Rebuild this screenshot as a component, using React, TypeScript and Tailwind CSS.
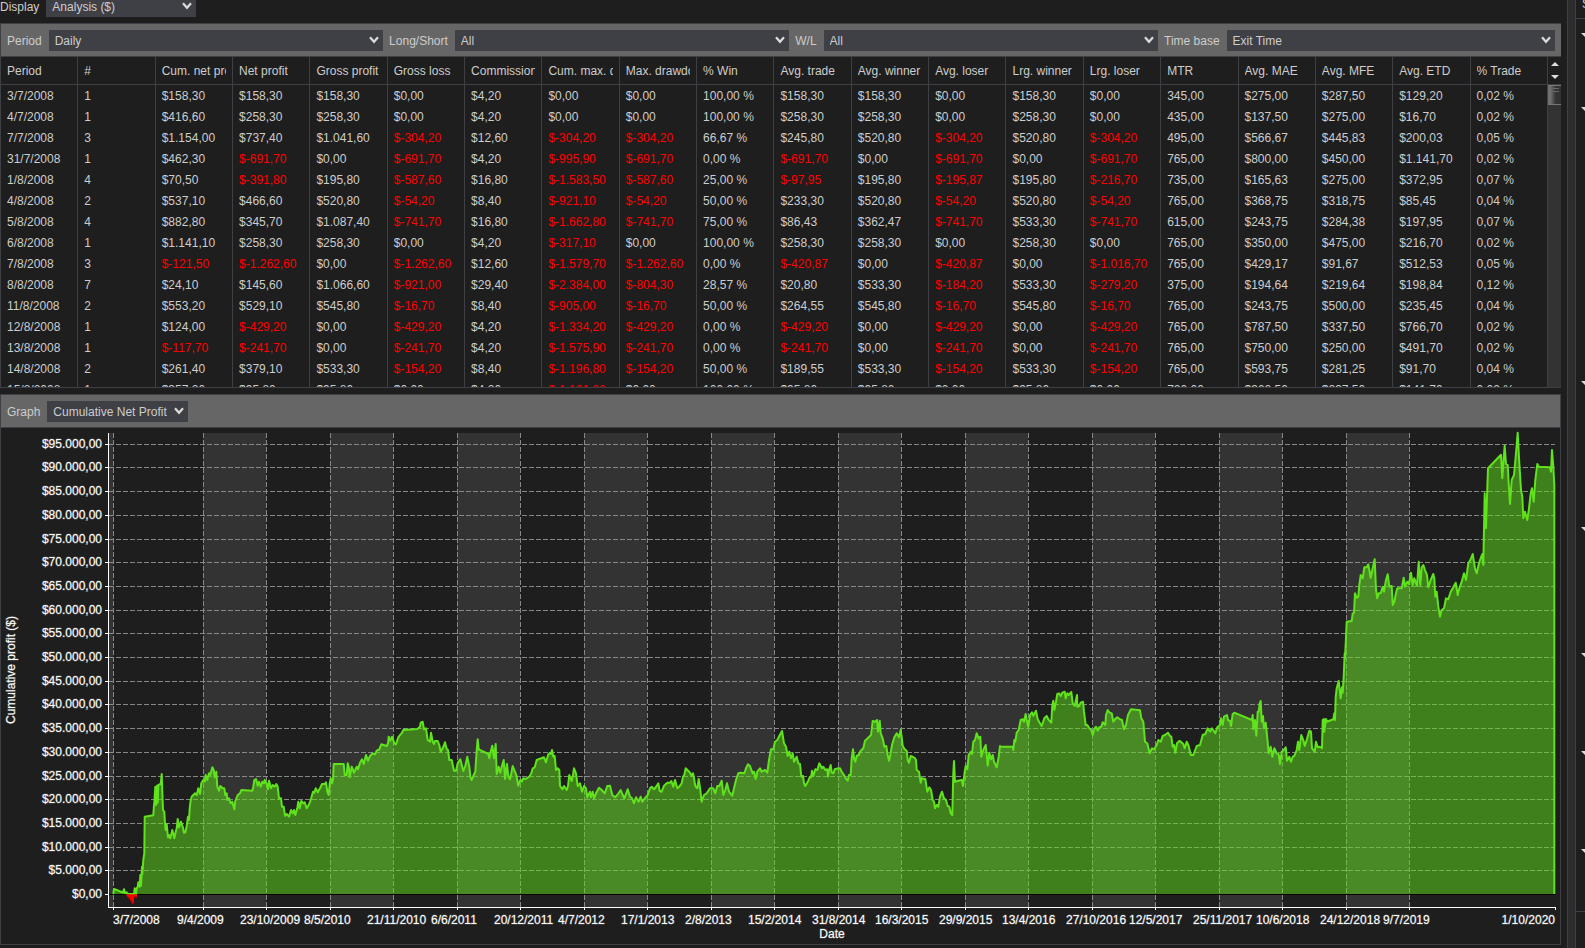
import { useState } from "react"

const columns = [
  'Period', '#', 'Cum. net profit', 'Net profit', 'Gross profit', 'Gross loss', 'Commission',
  'Cum. max. drawdown', 'Max. drawdown', '% Win', 'Avg. trade', 'Avg. winner', 'Avg. loser',
  'Lrg. winner', 'Lrg. loser', 'MTR', 'Avg. MAE', 'Avg. MFE', 'Avg. ETD', '% Trade',
];

const rows = [
  '3/7/2008|1|$158,30|$158,30|$158,30|$0,00|$4,20|$0,00|$0,00|100,00 %|$158,30|$158,30|$0,00|$158,30|$0,00|345,00|$275,00|$287,50|$129,20|0,02 %',
  '4/7/2008|1|$416,60|$258,30|$258,30|$0,00|$4,20|$0,00|$0,00|100,00 %|$258,30|$258,30|$0,00|$258,30|$0,00|435,00|$137,50|$275,00|$16,70|0,02 %',
  '7/7/2008|3|$1.154,00|$737,40|$1.041,60|$-304,20|$12,60|$-304,20|$-304,20|66,67 %|$245,80|$520,80|$-304,20|$520,80|$-304,20|495,00|$566,67|$445,83|$200,03|0,05 %',
  '31/7/2008|1|$462,30|$-691,70|$0,00|$-691,70|$4,20|$-995,90|$-691,70|0,00 %|$-691,70|$0,00|$-691,70|$0,00|$-691,70|765,00|$800,00|$450,00|$1.141,70|0,02 %',
  '1/8/2008|4|$70,50|$-391,80|$195,80|$-587,60|$16,80|$-1.583,50|$-587,60|25,00 %|$-97,95|$195,80|$-195,87|$195,80|$-216,70|735,00|$165,63|$275,00|$372,95|0,07 %',
  '4/8/2008|2|$537,10|$466,60|$520,80|$-54,20|$8,40|$-921,10|$-54,20|50,00 %|$233,30|$520,80|$-54,20|$520,80|$-54,20|765,00|$368,75|$318,75|$85,45|0,04 %',
  '5/8/2008|4|$882,80|$345,70|$1.087,40|$-741,70|$16,80|$-1.662,80|$-741,70|75,00 %|$86,43|$362,47|$-741,70|$533,30|$-741,70|615,00|$243,75|$284,38|$197,95|0,07 %',
  '6/8/2008|1|$1.141,10|$258,30|$258,30|$0,00|$4,20|$-317,10|$0,00|100,00 %|$258,30|$258,30|$0,00|$258,30|$0,00|765,00|$350,00|$475,00|$216,70|0,02 %',
  '7/8/2008|3|$-121,50|$-1.262,60|$0,00|$-1.262,60|$12,60|$-1.579,70|$-1.262,60|0,00 %|$-420,87|$0,00|$-420,87|$0,00|$-1.016,70|765,00|$429,17|$91,67|$512,53|0,05 %',
  '8/8/2008|7|$24,10|$145,60|$1.066,60|$-921,00|$29,40|$-2.384,00|$-804,30|28,57 %|$20,80|$533,30|$-184,20|$533,30|$-279,20|375,00|$194,64|$219,64|$198,84|0,12 %',
  '11/8/2008|2|$553,20|$529,10|$545,80|$-16,70|$8,40|$-905,00|$-16,70|50,00 %|$264,55|$545,80|$-16,70|$545,80|$-16,70|765,00|$243,75|$500,00|$235,45|0,04 %',
  '12/8/2008|1|$124,00|$-429,20|$0,00|$-429,20|$4,20|$-1.334,20|$-429,20|0,00 %|$-429,20|$0,00|$-429,20|$0,00|$-429,20|765,00|$787,50|$337,50|$766,70|0,02 %',
  '13/8/2008|1|$-117,70|$-241,70|$0,00|$-241,70|$4,20|$-1.575,90|$-241,70|0,00 %|$-241,70|$0,00|$-241,70|$0,00|$-241,70|765,00|$750,00|$250,00|$491,70|0,02 %',
  '14/8/2008|2|$261,40|$379,10|$533,30|$-154,20|$8,40|$-1.196,80|$-154,20|50,00 %|$189,55|$533,30|$-154,20|$533,30|$-154,20|765,00|$593,75|$281,25|$91,70|0,04 %',
  '15/8/2008|1|$357,20|$95,80|$95,80|$0,00|$4,20|$-1.101,00|$0,00|100,00 %|$95,80|$95,80|$0,00|$95,80|$0,00|720,00|$362,50|$237,50|$141,70|0,02 %',
].map(row => row.split('|'));

const yTicks: [number, string][] = [
  [444, '$95.000,00'], [467, '$90.000,00'], [491, '$85.000,00'], [515, '$80.000,00'], [539, '$75.000,00'],
  [562, '$70.000,00'], [586, '$65.000,00'], [610, '$60.000,00'], [633, '$55.000,00'], [657, '$50.000,00'],
  [681, '$45.000,00'], [704, '$40.000,00'], [728, '$35.000,00'], [752, '$30.000,00'], [776, '$25.000,00'],
  [799, '$20.000,00'], [823, '$15.000,00'], [847, '$10.000,00'], [870, '$5.000,00'], [894, '$0,00'],
];

const xTicks: [number, string][] = [
  [113, '3/7/2008'], [203, '9/4/2009'], [266, '23/10/2009'], [330, '8/5/2010'], [393, '21/11/2010'],
  [457, '6/6/2011'], [520, '20/12/2011'], [584, '4/7/2012'], [647, '17/1/2013'], [711, '2/8/2013'],
  [774, '15/2/2014'], [838, '31/8/2014'], [901, '16/3/2015'], [965, '29/9/2015'], [1028, '13/4/2016'],
  [1092, '27/10/2016'], [1155, '12/5/2017'], [1219, '25/11/2017'], [1282, '10/6/2018'], [1346, '24/12/2018'],
  [1409, '9/7/2019'], [1555, '1/10/2020'],
];

// equity curve, stored in pieces: [x offset, y offset, points], three units per chart pixel
const curve: [number, number, string][] = [
  [0, 0, '340,522 342,507 350,510 362,515 368,518 372,508 375,520 380,517 384,522 402,522 404,505 408,522 410,505 413,500 415,487 419,500 421,465 423,497 426,440 427,462 430,420 433,400 434,290 460,286 462,255 463,250 466,200 468,255 471,197 473,248 475,195 482,192 485,162 487,215 489,270 493,275 495,310 497,330 500,312 504,352 507,345 511,355 517,330 523,355 527,335 530,325 533,297 537,322 543,305 548,320 552,338 556,337 560,318 564,290 567,300 569,265 572,240 575,230 585,220 590,225 595,205 600,222 604,190 610,180 614,185 617,165 622,180 627,160 631,165 637,142 641,150 644,172 649,155 652,200 657,212 661,198 668,205 673,205 676,225 680,220 682,240 687,235 692,250 697,245 703,268 706,243 713,225 720,220 724,210 757,212 760,200 763,180 768,177 773,197 777,185 782,200 787,185 792,190 794,180 800,192 804,208 807,182 813,205 818,195 824,200 829,192 833,200 837,235 843,235 846,260 851,260 855,287 860,282 867,290 873,270 878,280 882,270 886,285 892,265 895,245 899,265 904,243 910,250 914,247 920,265 926,255 932,240 939,215 943,218 947,205 953,217 960,205 966,192 974,192 978,187 982,215 986,225 989,190 992,175 996,190 999,180 1001,132 1031,132 1034,165 1040,165 1043,130 1046,140 1049,172 1055,140 1062,158 1070,140 1074,148 1080,128 1086,118 1091,132 1098,105 1104,122 1110,108 1118,100 1125,103 1130,92 1138,88 1144,73 1160,78 1164,70 1166,50 1171,62 1176,50 1183,70 1188,73 1195,52'],
  [1200, -120, '0,165 5,160 10,150 52,147 60,140 62,128 68,125 72,148 78,145 83,180 90,185 93,158 98,185 102,192 105,183 113,183 118,195 122,215 128,205 135,187 140,207 144,210 148,240 155,240 162,272 168,272 173,250 181,238 190,273 196,258 202,230 208,260 211,290 215,300 220,288 226,275 230,210 233,178 236,208 265,222 268,235 272,215 277,197 282,235 287,192 290,282 296,260 301,278 305,260 311,240 315,297 321,252 325,290 330,298 334,280 338,258 343,270 349,285 355,317 361,300 365,305 370,295 377,297 388,290 394,280 398,265 404,262 410,240 432,232 438,247 444,225 450,218 453,222 456,210 460,230 464,228 468,270 473,265 478,270 480,318 487,328 492,318 500,330 504,318 508,285 515,303 519,285 522,265 528,280 533,318 540,310 546,335 552,318 558,325 562,352 570,335 573,352 578,335 582,355 588,340 597,323 605,330 614,340 622,318 630,317 637,345 645,352 652,345 662,330 667,342 673,355 683,328 690,350 696,355 702,370 708,352 716,365 722,350 727,365 734,355 743,345 750,325 755,320 762,328 770,318 775,310 779,333 785,335 792,317 802,308 810,308 814,303 820,320 825,300 832,325 838,320 845,310 849,290 853,285 857,265 870,278 875,287 879,280 882,295 886,318 892,325 896,297 901,330 905,365 912,345 920,340 930,325 940,325 946,340 952,318 958,318 965,302 970,345 976,330 981,310 987,335 997,347 1002,325 1008,300 1015,280 1022,278 1033,280 1038,265 1044,253 1050,258 1058,280 1062,275 1067,297 1072,275 1080,265 1085,275 1095,270 1102,278 1107,240 1113,208 1120,208 1125,185 1132,180 1138,168 1146,153 1152,190 1158,200 1163,228 1168,215 1173,235 1178,220 1182,245 1190,230 1195,250'],
  [2400, -120, '0,252 4,290 9,288 12,310 16,318 25,302 30,290 33,292 36,272 40,288 46,268 52,270 58,250 66,265 70,260 76,270 82,268 84,290 88,268 92,255 95,278 100,280 104,268 115,265 120,265 125,275 132,285 137,295 143,302 147,285 152,285 155,235 159,208 162,235 166,245 170,228 176,225 182,212 190,205 195,182 203,175 210,168 213,165 218,123 226,125 231,120 234,155 239,122 242,160 248,175 253,200 259,198 262,220 267,242 271,225 276,195 283,172 290,160 297,172 302,150 305,172 308,198 314,208 320,212 323,240 327,248 332,228 338,230 345,235 348,240 350,270 357,275 362,308 365,295 376,297 382,335 388,322 393,330 398,360 402,365 405,385 410,375 415,380 420,350 426,335 432,355 438,360 443,378 448,380 452,400 457,405 460,280 462,243 465,305 475,302 486,300 489,318 494,275 497,258 502,268 506,225 512,215 516,222 520,185 525,180 530,160 536,175 541,170 544,230 550,210 557,195 560,225 563,257 568,218 573,238 578,225 582,245 590,262 596,230 600,198 603,200 638,200 640,210 643,180 646,185 650,158 656,150 662,120 668,118 672,125 677,102 680,120 685,140 690,105 696,97 700,107 708,92 713,118 720,130 725,138 733,115 740,108 745,118 754,128 757,75 760,62 763,90 768,65 772,42 777,40 782,48 787,38 794,35 797,55 802,40 806,45 814,36 818,70 824,78 831,45 832,80 838,78 842,68 849,65 852,95 857,135 862,135 868,145 874,150 878,165 884,145 888,140 893,152 898,142 904,140 908,127 916,135 918,105 923,90 928,97 935,100 940,125 945,118 952,112 960,118 966,120 972,148 978,135 984,105 993,88 1020,91 1024,115 1030,125 1035,185 1042,190 1049,220 1056,205 1062,208 1070,195 1075,180 1082,185 1088,168 1095,165 1104,158 1110,168 1114,170 1118,200 1122,195 1126,218 1131,190 1138,183'],
  [3540, -240, '0,303 10,312 14,325 20,305 26,318 32,345 40,345 50,318 60,315 68,285 76,282 83,265 90,275 96,265 106,280 112,262 120,255 123,235 128,255 132,230 141,225 144,240 150,243 153,258 158,222 163,218 216,240 218,225 220,268 225,240 229,287 233,215 236,215 239,190 242,183 245,245 249,228 252,265 257,248 262,295 266,340 272,320 277,350 283,325 290,340 296,343 300,372 305,335 311,330 317,322 321,362 328,350 333,365 338,350 343,348 350,330 354,305 358,330 364,285 370,300 374,318 380,300 388,272 393,275 396,325 404,335 408,305 413,322 420,320 426,325 428,240 432,237 433,275 438,237 441,245 460,238 463,220 465,240 467,170 470,145 476,123 482,175 486,142 488,158 491,110 494,40'],
  [3185, -1170, '850,985 855,875 870,873 873,850 877,848 880,790 885,803 890,800 893,765 897,735 903,745 908,712 915,712 920,703 927,743 933,715 939,688 943,780 947,805 951,790 957,790 963,770 967,785 973,750 978,733 983,770 990,768 993,825 998,815 1003,790 1007,775 1020,775 1026,743 1030,770 1037,755 1042,762 1048,728 1053,765 1058,745 1066,768 1071,695 1076,765 1080,712 1085,705 1090,720 1096,735 1100,772 1107,750 1115,732 1118,745 1121,800 1125,785 1130,830 1135,860 1140,840 1147,835 1153,805 1160,808 1167,785 1173,775 1182,758 1188,795 1193,775 1200,755 1207,730 1213,750 1220,700 1226,690 1233,672 1240,715 1245,730 1252,700 1258,682 1262,672 1265,705 1269,490 1273,595 1276,500 1279,415 1318,374 1322,445 1326,385 1329,347 1333,402 1338,405 1341,460 1345,522 1350,450 1357,435 1362,380 1368,308 1373,400 1378,480 1382,500 1385,565 1390,545 1397,570 1402,535 1407,490 1411,475 1416,515 1421,450 1427,402 1432,410 1464,412 1468,425 1471,360 1475,410 1478,465 1478,1692'],
];

const linePoints = curve.map(([dx, dy, points]) => (
  points.split(' ').map(point => {
    const [x, y] = point.split(',').map(Number);
    return `${((x + dx) / 3).toFixed(1)},${(720 + (y + dy) / 3).toFixed(1)}`;
  }).join(' ')
)).join(' ');

// heights of the property groups in the side panel
const groups = ['h-[74px]', 'h-[274px]', 'h-[146px]', 'h-[126px]', 'h-[98px]', 'h-[98px]', 'h-[62px]'];

type DropdownProps = {
  id: string;
  label: string;
  options: string[];
  className: string;
};

function Dropdown({ id, label, options, className }: DropdownProps) {
  const [value, setValue] = useState(options[0]);
  return (
    <>
      <label htmlFor={id} className="h-[21px] shrink-0 whitespace-nowrap pr-px pt-px leading-[21px]">{label}</label>
      <div className={'relative min-w-0 ' + className}>
        <select
          id={id}
          value={value}
          onChange={ev => setValue(ev.target.value)}
          className="block h-[21px] w-full appearance-none bg-[#3f3f46] pl-1.5 pr-4 pt-0.5 leading-[19px] text-[#cdcdcd] outline-none"
        >
          {options.map(option => <option key={option}>{option}</option>)}
        </select>
        <svg viewBox="0 0 10 8" className="pointer-events-none absolute right-1 top-1.5 h-2 w-2.5" aria-hidden="true">
          <path d="M1 1.2 L5 5.8 L9 1.2" fill="none" stroke="#dcdcdc" strokeWidth="2.2" />
        </svg>
      </div>
    </>
  );
}

function TradesTable() {
  return (
    <div className="flex h-[330px] overflow-hidden">
      <div className="min-w-0 flex-1">
        <table className="w-full table-fixed border-separate border-spacing-0">
          <thead>
            <tr>
              {columns.map(column => (
                <th key={column} className="h-7 border-b border-r border-[#3f3f46] p-0 pl-1.5 pr-1.5 text-left font-normal">
                  <div className="overflow-hidden whitespace-nowrap">{column}</div>
                </th>
              ))}
            </tr>
          </thead>
          <tbody>
            {rows.map(row => (
              <tr key={row[0]}>
                {row.map((cell, i) => (
                  <td
                    key={i}
                    className={'h-[21px] whitespace-nowrap border-r border-[#3f3f46] p-0 pl-1.5 ' + (cell.startsWith('$-') ? 'text-[#f00]' : '')}
                  >
                    {cell}
                  </td>
                ))}
              </tr>
            ))}
          </tbody>
        </table>
      </div>
      <div className="flex w-[13px] flex-col bg-[#333]">
        <div className="flex h-7 flex-col items-center justify-between border-b border-[#3f3f46] bg-[#1e1e1e] py-1">
          <button type="button" aria-label="Scroll up">
            <svg viewBox="0 0 8 5" className="block h-[5px] w-2"><path d="M0 5 L4 1 L8 5 Z" fill="#dcdcdc" /></svg>
          </button>
          <button type="button" aria-label="Scroll down">
            <svg viewBox="0 0 8 5" className="block h-[5px] w-2"><path d="M0 0 L4 4 L8 0 Z" fill="#dcdcdc" /></svg>
          </button>
        </div>
        <div className="flex h-5 flex-col gap-0.5 border-b border-t border-[#777] bg-linear-to-r from-[#707070] from-20% to-[#333] to-60% pl-[3px] pr-0.5 pt-0.5">
          <div className="h-px bg-[#666]" />
          <div className="h-px bg-[#666]" />
        </div>
      </div>
    </div>
  );
}

function ProfitChart() {
  return (
    <svg viewBox="1 428 1559 516" className="block w-full" role="img" aria-label="Cumulative profit by date">
      <g fill="#333" shapeRendering="crispEdges">
        <rect x="109" y="433" width="4" height="474" />
        {xTicks.slice(1, 21).map(([x], i) => (
          i % 2 === 0 && <rect key={x} x={x} y="433" width={xTicks[i + 2][0] - x} height="474" />
        ))}
      </g>
      <g stroke="#888" strokeDasharray="5 2" shapeRendering="crispEdges">
        {yTicks.slice(0, 19).map(([y]) => <line key={y} x1="109" x2="1555" y1={y + 0.5} y2={y + 0.5} />)}
        {xTicks.slice(0, 21).map(([x]) => <line key={x} x1={x + 0.5} x2={x + 0.5} y1="433" y2="907" />)}
      </g>
      <polygon points={`113,894 ${linePoints} 113,894`} fill="#60e21c" fillOpacity="0.5" />
      <line x1="109" x2="1556" y1="894.5" y2="894.5" stroke="#000" shapeRendering="crispEdges" />
      <polyline points={linePoints} fill="none" stroke="#60e21c" strokeWidth="2" strokeLinejoin="round" />
      <path d="M126 894 L128 898 L129.5 897.5 L130 901 L131.3 900 L132 904 L133.7 903 L134.3 897 L135.3 896 L136 899 L137.5 894.5 Z" fill="#f00" />
      <g stroke="#fff" shapeRendering="crispEdges">
        <line x1="108.5" x2="108.5" y1="433" y2="908" />
        <line x1="108" x2="1556" y1="907.5" y2="907.5" />
        {yTicks.map(([y]) => <line key={y} x1="105" x2="108" y1={y + 0.5} y2={y + 0.5} />)}
        {xTicks.map(([x]) => <line key={x} x1={x + 0.5} x2={x + 0.5} y1="908" y2="910" />)}
      </g>
      <g fill="#fff" stroke="#fff" strokeOpacity="0.25" fontSize="12">
        {yTicks.map(([y, label]) => <text key={y} x="102" y={y + 4} textAnchor="end">{label}</text>)}
        {xTicks.map(([x, label], i) => {
          if (i === xTicks.length - 1) {
            return <text key={x} x={x} y="924" textAnchor="end">{label}</text>;
          }
          return <text key={x} x={i === 0 ? x : x - 26} y="924">{label}</text>;
        })}
        <text x="832" y="938" textAnchor="middle">Date</text>
        <text transform="translate(15 670) rotate(-90)" textAnchor="middle">Cumulative profit ($)</text>
      </g>
    </svg>
  );
}

export default function App() {
  return (
    <div className="flex min-h-screen overflow-hidden bg-[#1e1e1e] font-['Liberation_Sans',Arial,sans-serif] text-xs text-[#cdcdcd]">
      <main className="min-w-0 flex-1 pr-1.5">
        <div className="-mt-1 flex h-[27px] items-start gap-1.5">
          <Dropdown id="display" label="Display" options={['Analysis ($)', 'Summary', 'Trades']} className="w-[150px]" />
        </div>

        <section className="border-y border-l border-[#3f3f46]">
          <div className="flex h-[33px] items-center gap-1.5 border-b border-[#3f3f46] bg-[#666] px-1.5">
            <Dropdown id="period" label="Period" options={['Daily', 'Weekly', 'Monthly']} className="flex-[334]" />
            <Dropdown id="direction" label="Long/Short" options={['All', 'Long', 'Short']} className="flex-[334]" />
            <Dropdown id="result" label="W/L" options={['All', 'Winners', 'Losers']} className="flex-[334]" />
            <Dropdown id="time-base" label="Time base" options={['Exit Time', 'Entry Time']} className="flex-[328]" />
          </div>
          <TradesTable />
        </section>

        <section className="mt-1.5 border border-[#3f3f46]">
          <div className="flex h-[33px] items-center gap-1.5 border-b border-[#3f3f46] bg-[#666] px-1.5">
            <Dropdown id="graph" label="Graph" options={['Cumulative Net Profit', 'Drawdown']} className="w-[141px]" />
          </div>
          <ProfitChart />
        </section>
      </main>

      <div className="w-[9px] shrink-0 border-x border-[#3f3f46] bg-[#2d2d30]" />

      <aside className="w-[9px] shrink-0 overflow-hidden">
        <div className="-mt-1 h-[23px] border-b border-[#3f3f46] pl-1.5 leading-4">S</div>
        <div className="border-b border-[#3f3f46] pl-[5px] pt-3.5">
          {groups.map((height, i) => (
            <div key={i} className={height}>
              <svg viewBox="0 0 8 4" className="h-1 w-2" aria-hidden="true"><path d="M0 0 H8 L4 4 Z" fill="#dcdcdc" /></svg>
            </div>
          ))}
        </div>
      </aside>
    </div>
  );
}
